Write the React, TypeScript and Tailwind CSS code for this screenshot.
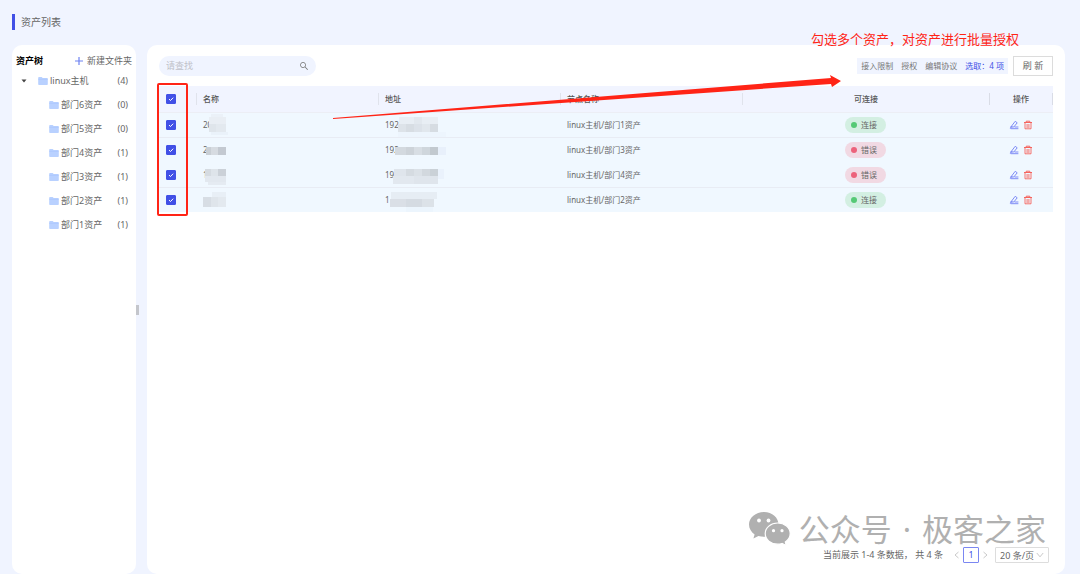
import React from 'react';
import { AiOutlineSearch } from 'react-icons/ai';

type Block = [x: number, y: number, w: number, h: number, fill: string];

interface Asset {
    name: string;
    address: string;
    node: string;
    online: boolean;
    divider: boolean;
    nameMask: Block[];
    addressMask: Block[];
}

const folders = [
    { name: '部门6资产', count: 0 },
    { name: '部门5资产', count: 0 },
    { name: '部门4资产', count: 1 },
    { name: '部门3资产', count: 1 },
    { name: '部门2资产', count: 1 },
    { name: '部门1资产', count: 1 },
];

const assets: Asset[] = [
    {
        name: '20', address: '192', node: 'linux主机/部门1资产', online: true, divider: true,
        nameMask: [[8, 1, 12, 4, '#ebf1f8'], [6, 4, 17, 15, '#e9eef4'], [6, 11, 7, 8, '#dfe5eb'], [13, 11, 10, 8, '#e3e9ef'], [8, 19, 17, 3, '#eaf2fa']],
        addressMask: [[14, 4, 39, 8, '#e8eef4'], [29, 4, 8, 8, '#e2e8ee'], [13, 11, 8, 8, '#dde3e9'], [21, 11, 8, 8, '#d7dde3'], [29, 11, 8, 8, '#dce2e9'], [37, 11, 8, 8, '#e1e7ed'], [45, 11, 8, 8, '#d6dce2'], [13, 19, 48, 5, '#edf5fd']],
    },
    {
        name: '2', address: '192', node: 'linux主机/部门3资产', online: false, divider: false,
        nameMask: [[3, 9, 5, 8, '#c9cfd5'], [8, 9, 7, 8, '#d6dbe1'], [15, 9, 8, 8, '#c3c9d1']],
        addressMask: [[10, 9, 11, 8, '#d3d9df'], [21, 9, 8, 8, '#cdd3d9'], [29, 9, 8, 8, '#d8dee4'], [37, 9, 8, 8, '#cfd6dc'], [45, 9, 8, 8, '#c2c9cf'], [53, 9, 8, 8, '#e8f0fb']],
    },
    {
        name: '1', address: '19', node: 'linux主机/部门4资产', online: false, divider: true,
        nameMask: [[2, 6, 6, 7, '#d5dbe1'], [8, 6, 7, 7, '#dee4ea'], [15, 6, 8, 7, '#cbd1d8'], [2, 13, 21, 6, '#e2e8ef'], [5, 19, 18, 3, '#e5ebf2']],
        addressMask: [[9, 6, 12, 7, '#dfe5ec'], [21, 6, 8, 7, '#d5dbe1'], [29, 6, 8, 7, '#dbe1e7'], [37, 6, 8, 7, '#d2d8de'], [45, 6, 8, 7, '#cad1d7'], [8, 13, 21, 8, '#e2e8ef'], [29, 13, 24, 8, '#dfe5ec'], [53, 6, 6, 10, '#eaf2fc']],
    },
    {
        name: '', address: '1', node: 'linux主机/部门2资产', online: true, divider: false,
        nameMask: [[9, 4, 14, 6, '#e8eff6'], [0, 9, 8, 10, '#d7dde4'], [8, 9, 7, 10, '#dfe5eb'], [15, 9, 8, 10, '#e3e9ef']],
        addressMask: [[6, 4, 46, 7, '#e6edf4'], [5, 11, 16, 8, '#dadfe6'], [21, 11, 16, 8, '#d5dbe2'], [37, 11, 12, 8, '#dce2e8'], [21, 19, 27, 5, '#ecf5fd']],
    },
];

const Folder: React.FC = () => (
    <svg viewBox="0 0 10 8" className="h-2 w-[10px] shrink-0" aria-hidden="true">
        <path d="M1 0h2.700l1 1H9a.8.8 0 0 1 .8.8v5.400A.8.8 0 0 1 9 8H1a.8.8 0 0 1-.8-.8V.8A.8.8 0 0 1 1 0Z" fill="#b9d1ff" />
        <path d="M.2 2.300h9.600" stroke="#a3c1fb" strokeWidth=".5" />
    </svg>
);

const EditIcon: React.FC = () => (
    <svg viewBox="0 0 10 10" className="size-[10px]" fill="none" stroke="currentColor" strokeLinejoin="round" strokeLinecap="round" aria-hidden="true">
        <path d="M2 6.800 6.200 1.300 8.200 2.800 4.800 7H2Z" strokeWidth=".9" />
        <path d="M3 6.800C1.300 7 .6 8.700 2 8.700H9M6 7h3" strokeWidth=".9" />
    </svg>
);

const DeleteIcon: React.FC = () => (
    <svg viewBox="0 0 10 10" className="size-[10px]" fill="none" stroke="currentColor" aria-hidden="true">
        <path d="M1 2.500h8M3.200 2.300V1.200h3.600v1.100" strokeWidth="1" />
        <path d="M2 2.800v6h6v-6M4.100 4v4M5.900 4v4" strokeWidth=".9" />
    </svg>
);

const Tick: React.FC<{ label: string }> = ({ label }) => (
    <label className="relative mx-auto block size-[10px]">
        <input type="checkbox" defaultChecked aria-label={label} className="peer block size-[10px] appearance-none rounded-[1px] border border-[#c5c9d6] bg-white checked:border-[#4150e6] checked:bg-[#4150e6]" />
        <svg viewBox="0 0 10 10" className="pointer-events-none absolute inset-0 hidden size-[10px] peer-checked:block" aria-hidden="true">
            <path d="M3 5.100 4.500 6.500 7.200 3.700" fill="none" stroke="#fff" strokeWidth="1" />
        </svg>
    </label>
);

const Masked: React.FC<{ text: string; blocks: Block[] }> = ({ text, blocks }) => (
    <div className="relative h-6 leading-6">
        {text}
        <svg viewBox="0 0 64 25" className="absolute top-0 left-0 h-[25px] w-16" aria-hidden="true">
            {blocks.map(([x, y, w, h, fill], i) => (
                <rect key={i} x={x} y={y} width={w} height={h} fill={fill} />
            ))}
        </svg>
    </div>
);

const Status: React.FC<{ online: boolean }> = ({ online }) => (
    <span className={`inline-flex h-4 items-center gap-1 rounded-full px-[6px] align-middle leading-4 ${online ? 'bg-[#d3efe2]' : 'bg-[#f1d9e3]'}`}>
        <span className={`size-[6px] rounded-full ${online ? 'bg-[#55c975]' : 'bg-[#ec627b]'}`} />
        <span className="pr-[3px]">{online ? '连接' : '错误'}</span>
    </span>
);

const Sidebar: React.FC = () => (
    <aside className="w-[124px] shrink-0 rounded-[10px] bg-white pt-2 pr-1 pl-1">
        <div className="flex h-4 items-center justify-between">
            <h2 className="font-bold text-black">资产树</h2>
            <button className="flex items-center gap-1">
                <svg viewBox="0 0 8 8" className="size-2" aria-hidden="true">
                    <path d="M4 0v8M0 4h8" stroke="#6f83f2" strokeWidth="1.200" />
                </svg>
                新建文件夹
            </button>
        </div>
        <div className="flex h-6 items-center pr-1">
            <svg viewBox="0 0 6 4" className="mx-[5px] h-1 w-[6px]" aria-hidden="true">
                <path d="M.5.5h5L3 3.500Z" fill="#444" />
            </svg>
            <span className="flex items-center gap-[2px] pl-[6px]"><Folder />linux主机</span>
            <span className="ml-auto">(4)</span>
        </div>
        <ul>
            {folders.map(f => (
                <li key={f.name} className="flex h-6 items-center gap-[2px] pr-1 pl-[33px]">
                    <Folder />
                    {f.name}
                    <span className="ml-auto">({f.count})</span>
                </li>
            ))}
        </ul>
    </aside>
);

const AssetTable: React.FC = () => (
    <table className="w-full table-fixed border-collapse text-left text-[8px] leading-3">
        <colgroup>
            <col className="w-[37px]" />
            <col />
            <col />
            <col />
            <col className="w-[247px]" />
            <col className="w-16" />
        </colgroup>
        <thead className="bg-[#f1f4ff] text-[#555]">
            <tr className="h-[26px] border-b border-[#eceef5]">
                <th className="p-0 pr-[14px]"><Tick label="全选" /></th>
                {['名称', '地址', '节点名称'].map(title => (
                    <th key={title} className="p-0 font-medium"><div className="border-l border-[#e0e3ec] pl-[6px]">{title}</div></th>
                ))}
                <th className="p-0 text-center font-medium"><div className="border-l border-[#e0e3ec]">可连接</div></th>
                <th className="p-0 text-center font-medium"><div className="border-x border-[#d9dce6]">操作</div></th>
            </tr>
        </thead>
        <tbody className="bg-[#f0f8ff]">
            {assets.map(a => (
                <tr key={a.node} className={`h-[25px] border-b ${a.divider ? 'border-[#e8ecf4]' : 'border-transparent'}`}>
                    <td className="p-0 pr-[14px]"><Tick label={a.node} /></td>
                    <td className="p-0 pl-[7px]"><Masked text={a.name} blocks={a.nameMask} /></td>
                    <td className="p-0 pl-[7px]"><Masked text={a.address} blocks={a.addressMask} /></td>
                    <td className="p-0 pl-[7px]">{a.node}</td>
                    <td className="p-0 text-center"><Status online={a.online} /></td>
                    <td className="p-0">
                        <div className="flex justify-center gap-1">
                            <button aria-label="编辑" className="text-[#7280f5]"><EditIcon /></button>
                            <button aria-label="删除" className="text-[#f5655f]"><DeleteIcon /></button>
                        </div>
                    </td>
                </tr>
            ))}
        </tbody>
    </table>
);

const Toolbar: React.FC = () => (
    <div className="flex h-5 items-center">
        <label className="flex h-5 w-[157px] items-center rounded-full bg-[#f0f4ff] pr-[7px] pl-[7px]">
            <input type="text" aria-label="请查找" placeholder="请查找" className="min-w-0 flex-1 outline-none placeholder:text-[#bfc1c9]" />
            <AiOutlineSearch className="size-[10px] text-[#777]" />
        </label>
        <div className="ml-auto flex h-4 items-center gap-2 bg-[#f0f4ff] px-1 text-[8px] text-[#777]">
            <button>接入限制</button>
            <button>授权</button>
            <button>编辑协议</button>
            <span className="text-[#4150e6]">选取：4 项</span>
        </div>
        <button className="ml-[5px] h-5 w-10 border border-[#dcdcdc] bg-white">刷 新</button>
    </div>
);

const Pagination: React.FC = () => (
    <div className="mt-auto mr-1 flex h-4 items-center justify-end">
        <span className="mr-2">当前展示 1-4 条数据， 共 4 条</span>
        <button aria-label="上一页" className="w-3">
            <svg viewBox="0 0 8 8" className="mx-auto size-2" aria-hidden="true"><path d="M5.500 1 2 4l3.500 3" fill="none" stroke="#bbb" strokeWidth=".8" /></svg>
        </button>
        <button className="h-4 w-4 rounded-[1px] border border-[#7b87f2] leading-3 text-[#4150e6]">1</button>
        <button aria-label="下一页" className="mr-1 w-3">
            <svg viewBox="0 0 8 8" className="mx-auto size-2" aria-hidden="true"><path d="M2.500 1 6 4 2.500 7" fill="none" stroke="#bbb" strokeWidth=".8" /></svg>
        </button>
        <div className="relative">
            <select aria-label="每页条数" className="block h-4 w-[54px] appearance-none rounded-[1px] border border-[#ddd] bg-white pl-1">
                <option>20 条/页</option>
            </select>
            <svg viewBox="0 0 8 8" className="pointer-events-none absolute top-1 right-[5px] size-2" aria-hidden="true"><path d="M.8 2 4 5.800 7.200 2" fill="none" stroke="#bbb" strokeWidth=".8" /></svg>
        </div>
    </div>
);

const Annotations: React.FC = () => (
    <div className="pointer-events-none absolute inset-0">
        <div className="absolute top-[83px] left-[157px] h-[133px] w-[31px] rounded-[2px] border-2 border-[#ff2416]" />
        <svg viewBox="0 0 510 46" className="absolute top-[74px] left-[333px] h-[46px] w-[510px]" aria-hidden="true">
            <path d="M0 44 498 4 497 1 508 7 499 13 498 10 0 45Z" fill="#ff2416" />
        </svg>
        <p className="absolute top-[29px] right-[61px] text-[13px] leading-5 text-[#ff2416]">勾选多个资产，对资产进行批量授权</p>
    </div>
);

const Watermark: React.FC = () => (
    <div className="pointer-events-none absolute right-[34px] bottom-[28px] flex items-center gap-2 text-[#b0b0b0]">
        <svg viewBox="0 0 42 34" className="h-[34px] w-[42px]" aria-hidden="true">
            <path d="M15 0C6.700 0 0 5.600 0 12.600c0 4 2.200 7.500 5.600 9.900L4.400 26.600l5-2.600c1.800.5 3.600.8 5.600.8C23.300 24.800 29.500 19.400 29.500 12.500 29.500 5.600 23.300 0 15 0Z" fill="currentColor" />
            <circle cx="10" cy="8.500" r="1.900" fill="#fff" />
            <circle cx="19.500" cy="8.500" r="1.900" fill="#fff" />
            <path d="M28.700 11c-7 0-12.500 4.700-12.500 10.600s5.500 10.600 12.500 10.600c1.500 0 3-.2 4.300-.7l4.300 2.100-1-3.600c3-2 4.900-5 4.900-8.400C41.200 15.700 35.600 11 28.700 11Z" fill="currentColor" stroke="#fff" strokeWidth="1.200" />
            <circle cx="24.500" cy="18.700" r="1.600" fill="#fff" />
            <circle cx="33" cy="18.700" r="1.600" fill="#fff" />
        </svg>
        <p className="flex gap-[11px] text-[31px] leading-8 font-normal">
            <span>公众号</span>
            <span>·</span>
            <span>极客之家</span>
        </p>
    </div>
);

export default function App() {
    return (
        <div className="relative flex min-h-screen flex-col bg-[#f0f4ff] pr-[15px] pl-3 font-['Noto_Sans','Noto_Sans_CJK_SC',sans-serif] text-[9px] leading-4 text-[#666]">
            <header className="flex h-[45px] items-center pb-[2px]">
                <h1 className="border-l-[3px] border-[#4150e6] pl-[6px] text-[10px]">资产列表</h1>
            </header>
            <div className="flex flex-1">
                <Sidebar />
                <div className="flex w-[11px] items-center">
                    <span className="h-[10px] w-[3px] bg-[#c4c6cc]" />
                </div>
                <main className="flex min-w-0 flex-1 flex-col rounded-[10px] bg-white px-3 pt-[11px] pb-[11px]">
                    <Toolbar />
                    <div className="mt-[10px]"><AssetTable /></div>
                    <Pagination />
                </main>
            </div>
            <Watermark />
            <Annotations />
        </div>
    );
}
